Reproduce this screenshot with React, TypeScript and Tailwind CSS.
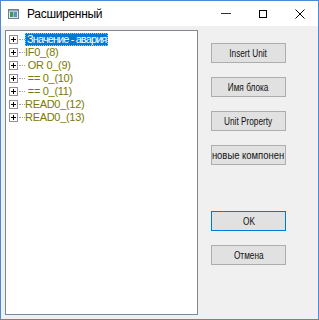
import React from "react";

const items = [
  { label: "Значение - авария", selected: true },
  { label: "IF0_(8)" },
  { label: " OR 0_(9)" },
  { label: " == 0_(10)" },
  { label: " == 0_(11)" },
  { label: "READ0_(12)" },
  { label: "READ0_(13)" },
];

const PlusBox = () => (
  <svg width="9" height="9" viewBox="0 0 9 9" className="shrink-0">
    <rect x="0.5" y="0.5" width="8" height="8" fill="#fff" stroke="#919191" />
    <path d="M2 4.5h5M4.5 2v5" stroke="#000" strokeWidth="1" />
  </svg>
);

const WinButton = ({
  label,
  primary,
  wide,
}: {
  label: string;
  primary?: boolean;
  wide?: boolean;
}) => (
  <button
    type="button"
    className={`flex h-[20px] w-[75px] items-center justify-center overflow-hidden whitespace-nowrap border bg-[#e1e1e1] text-[11px] leading-none text-[#111] ${
      primary ? "border-[#0078d7]" : "border-[#adadad]"
    }`}
  >
    <span className={`inline-block shrink-0 ${wide ? "scale-x-[0.86]" : "scale-x-[0.75]"}`}>
      {label}
    </span>
  </button>
);

export default function App() {
  return (
    <div
      className="flex h-[320px] w-[319px] flex-col border border-[#4a8ad6] bg-white"
      style={{ fontFamily: '"Liberation Sans", Arial, sans-serif' }}
    >
      {/* title bar */}
      <div className="flex h-[25px] items-center bg-white">
        <svg width="11" height="10" viewBox="0 0 11 10" className="ml-[7px]">
          <rect x="0.5" y="0.5" width="10" height="9" fill="#dfe9ee" stroke="#6d7f88" />
          <rect x="1" y="1" width="9" height="1.5" fill="#8aa4b3" />
          <rect x="2" y="3" width="3" height="5" fill="#3aa04a" />
          <rect x="5.5" y="3" width="3.5" height="5" fill="#5b8fc7" />
        </svg>
        <span className="ml-[8px] text-[12px] tracking-[-0.3px] text-black">Расширенный</span>
        <div className="ml-auto flex h-full items-center">
          <div className="flex h-full w-[37px] items-center justify-center">
            <div className="h-px w-[10px] bg-[#333]" />
          </div>
          <div className="flex h-full w-[37px] items-center justify-center">
            <div className="h-[8px] w-[8px] border border-black" />
          </div>
          <div className="flex h-full w-[37px] items-center justify-center">
            <svg width="10" height="10" viewBox="0 0 10 10">
              <path d="M0.5 0.5l9 9M9.5 0.5l-9 9" stroke="#000" strokeWidth="1" />
            </svg>
          </div>
        </div>
      </div>

      {/* client area */}
      <div className="flex flex-1 bg-[#f0f0f0] pb-[4px] pl-[4px] pt-[4px]">
        <div className="h-full w-[193px] border border-[#828790] bg-white pt-[2px]">
          {items.map((it) => (
            <div key={it.label} className="flex h-[13px] items-center pl-[3px]">
              <PlusBox />
              <div className="ml-px w-[6px] border-t border-dotted border-[#a0a0a0]" />
              {it.selected ? (
                <span className="flex h-[13px] items-center whitespace-pre border border-dotted border-[#ffb060] bg-[#0078d7] px-px text-[11px] leading-none tracking-[-0.9px] text-white">
                  {it.label}
                </span>
              ) : (
                <span className="whitespace-pre text-[11px] leading-none tracking-[-0.3px] text-[#7a7a00]">
                  {it.label}
                </span>
              )}
            </div>
          ))}
        </div>

        <div className="ml-[13px] flex flex-col pt-[13px]">
          <div className="flex flex-col gap-[14px]">
            <WinButton label="Insert Unit" />
            <WinButton label="Имя блока" />
            <WinButton label="Unit Property" />
            <WinButton label="новые компонен" wide />
          </div>
          <div className="mt-[46px] flex flex-col gap-[14px]">
            <WinButton label="OK" primary />
            <WinButton label="Отмена" />
          </div>
        </div>
      </div>
    </div>
  );
}
